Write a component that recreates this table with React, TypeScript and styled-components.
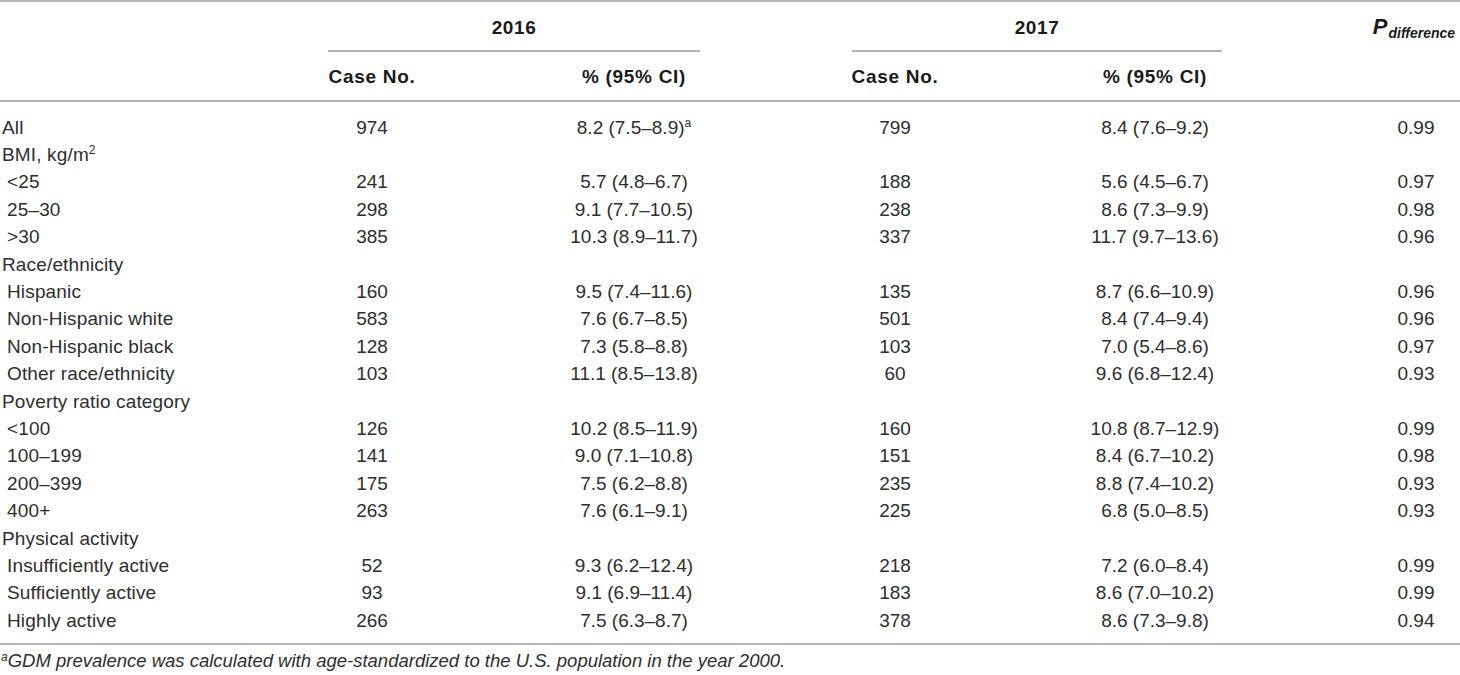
import React from "react";
import styled, { createGlobalStyle } from "styled-components";

const GlobalStyle = createGlobalStyle`
  html, body { margin: 0; padding: 0; background: #ffffff; }
  body { font-family: "Liberation Sans", Arial, sans-serif; color: #2e2e2e; }
`;

const COLS = "328px 88px 152px 132px 152px 86px 150px 134px 150px 88px";
const LINE = "#b5b5b5";

const Table = styled.div`
  width: 1460px;
  border-top: 2px solid ${LINE};
  font-size: 19px;
`;

const HeadRow = styled.div<{ $rule?: boolean; $h: number }>`
  display: grid;
  grid-template-columns: ${COLS};
  height: ${(p) => p.$h}px;
  align-items: stretch;
  border-bottom: ${(p) => (p.$rule ? `2px solid ${LINE}` : "none")};
`;

const GroupCell = styled.div<{ $from: number; $to: number }>`
  grid-column: ${(p) => p.$from} / ${(p) => p.$to};
  display: flex;
  align-items: center;
  justify-content: center;
  padding-top: 4px;
  border-bottom: 2px solid ${LINE};
  font-weight: 700;
  color: #1a1a1a;
  letter-spacing: 0.6px;
`;

const HeadCell = styled.div<{ $col: number; $pt?: number }>`
  grid-column: ${(p) => p.$col};
  display: flex;
  align-items: center;
  justify-content: center;
  padding-top: ${(p) => p.$pt ?? 0}px;
  white-space: nowrap;
  font-weight: 700;
  color: #1a1a1a;
  letter-spacing: 0.7px;
`;

const PHead = styled.span`
  font-style: italic;
  font-weight: 700;
  font-size: 22px;
  color: #1a1a1a;
  display: inline-flex;
  align-items: baseline;
  letter-spacing: 0;
  margin-left: -4px;
`;

const PSub = styled.span`
  font-size: 14px;
  position: relative;
  top: 4px;
  margin-left: 1px;
`;

const Body = styled.div`
  padding: 12px 0 9px;
  border-bottom: 2px solid ${LINE};
`;

const Row = styled.div`
  display: grid;
  grid-template-columns: ${COLS};
  height: 27.4px;
  align-items: center;
`;

const Label = styled.div<{ $sub?: boolean }>`
  grid-column: 1;
  padding-left: ${(p) => (p.$sub ? "7px" : "2px")};
  white-space: nowrap;
  letter-spacing: 0.15px;
`;

const Value = styled.div<{ $col: number }>`
  grid-column: ${(p) => p.$col};
  text-align: center;
  white-space: nowrap;
`;

const Sup = styled.sup`
  font-size: 12px;
  line-height: 0;
  vertical-align: 7px;
`;

const Footnote = styled.p`
  margin: 0;
  padding: 5px 0 0 1px;
  font-size: 18.5px;
  font-style: italic;
  color: #2e2e2e;
`;

const FootSup = styled.sup`
  font-size: 12px;
  line-height: 0;
  vertical-align: 6px;
`;

type Data = [string, string, React.ReactNode, string, string, string];

type Item =
  | { kind: "group"; label: React.ReactNode }
  | { kind: "data"; sub: boolean; d: Data };

const rows: Item[] = [
  { kind: "data", sub: false, d: ["All", "974", <>8.2 (7.5–8.9)<Sup>a</Sup></>, "799", "8.4 (7.6–9.2)", "0.99"] },
  { kind: "group", label: <>BMI, kg/m<Sup>2</Sup></> },
  { kind: "data", sub: true, d: ["<25", "241", "5.7 (4.8–6.7)", "188", "5.6 (4.5–6.7)", "0.97"] },
  { kind: "data", sub: true, d: ["25–30", "298", "9.1 (7.7–10.5)", "238", "8.6 (7.3–9.9)", "0.98"] },
  { kind: "data", sub: true, d: [">30", "385", "10.3 (8.9–11.7)", "337", "11.7 (9.7–13.6)", "0.96"] },
  { kind: "group", label: "Race/ethnicity" },
  { kind: "data", sub: true, d: ["Hispanic", "160", "9.5 (7.4–11.6)", "135", "8.7 (6.6–10.9)", "0.96"] },
  { kind: "data", sub: true, d: ["Non-Hispanic white", "583", "7.6 (6.7–8.5)", "501", "8.4 (7.4–9.4)", "0.96"] },
  { kind: "data", sub: true, d: ["Non-Hispanic black", "128", "7.3 (5.8–8.8)", "103", "7.0 (5.4–8.6)", "0.97"] },
  { kind: "data", sub: true, d: ["Other race/ethnicity", "103", "11.1 (8.5–13.8)", "60", "9.6 (6.8–12.4)", "0.93"] },
  { kind: "group", label: "Poverty ratio category" },
  { kind: "data", sub: true, d: ["<100", "126", "10.2 (8.5–11.9)", "160", "10.8 (8.7–12.9)", "0.99"] },
  { kind: "data", sub: true, d: ["100–199", "141", "9.0 (7.1–10.8)", "151", "8.4 (6.7–10.2)", "0.98"] },
  { kind: "data", sub: true, d: ["200–399", "175", "7.5 (6.2–8.8)", "235", "8.8 (7.4–10.2)", "0.93"] },
  { kind: "data", sub: true, d: ["400+", "263", "7.6 (6.1–9.1)", "225", "6.8 (5.0–8.5)", "0.93"] },
  { kind: "group", label: "Physical activity" },
  { kind: "data", sub: true, d: ["Insufficiently active", "52", "9.3 (6.2–12.4)", "218", "7.2 (6.0–8.4)", "0.99"] },
  { kind: "data", sub: true, d: ["Sufficiently active", "93", "9.1 (6.9–11.4)", "183", "8.6 (7.0–10.2)", "0.99"] },
  { kind: "data", sub: true, d: ["Highly active", "266", "7.5 (6.3–8.7)", "378", "8.6 (7.3–9.8)", "0.94"] },
];

const VALUE_COLS = [2, 4, 6, 8, 10];

export default function App() {
  return (
    <>
      <GlobalStyle />
      <Table>
        <HeadRow $h={50}>
          <GroupCell $from={2} $to={5}>2016</GroupCell>
          <GroupCell $from={6} $to={9}>2017</GroupCell>
          <HeadCell $col={10}>
            <PHead>
              P<PSub>difference</PSub>
            </PHead>
          </HeadCell>
        </HeadRow>
        <HeadRow $h={48} $rule>
          <HeadCell $col={2} $pt={2}>Case No.</HeadCell>
          <HeadCell $col={4} $pt={2}>% (95% CI)</HeadCell>
          <HeadCell $col={6} $pt={2}>Case No.</HeadCell>
          <HeadCell $col={8} $pt={2}>% (95% CI)</HeadCell>
        </HeadRow>
        <Body>
          {rows.map((r, i) =>
            r.kind === "group" ? (
              <Row key={i}>
                <Label>{r.label}</Label>
              </Row>
            ) : (
              <Row key={i}>
                <Label $sub={r.sub}>{r.d[0]}</Label>
                {r.d.slice(1).map((v, j) => (
                  <Value key={j} $col={VALUE_COLS[j]}>
                    {v}
                  </Value>
                ))}
              </Row>
            )
          )}
        </Body>
        <Footnote>
          <FootSup>a</FootSup>GDM prevalence was calculated with age-standardized to the U.S. population in the year 2000.
        </Footnote>
      </Table>
    </>
  );
}
